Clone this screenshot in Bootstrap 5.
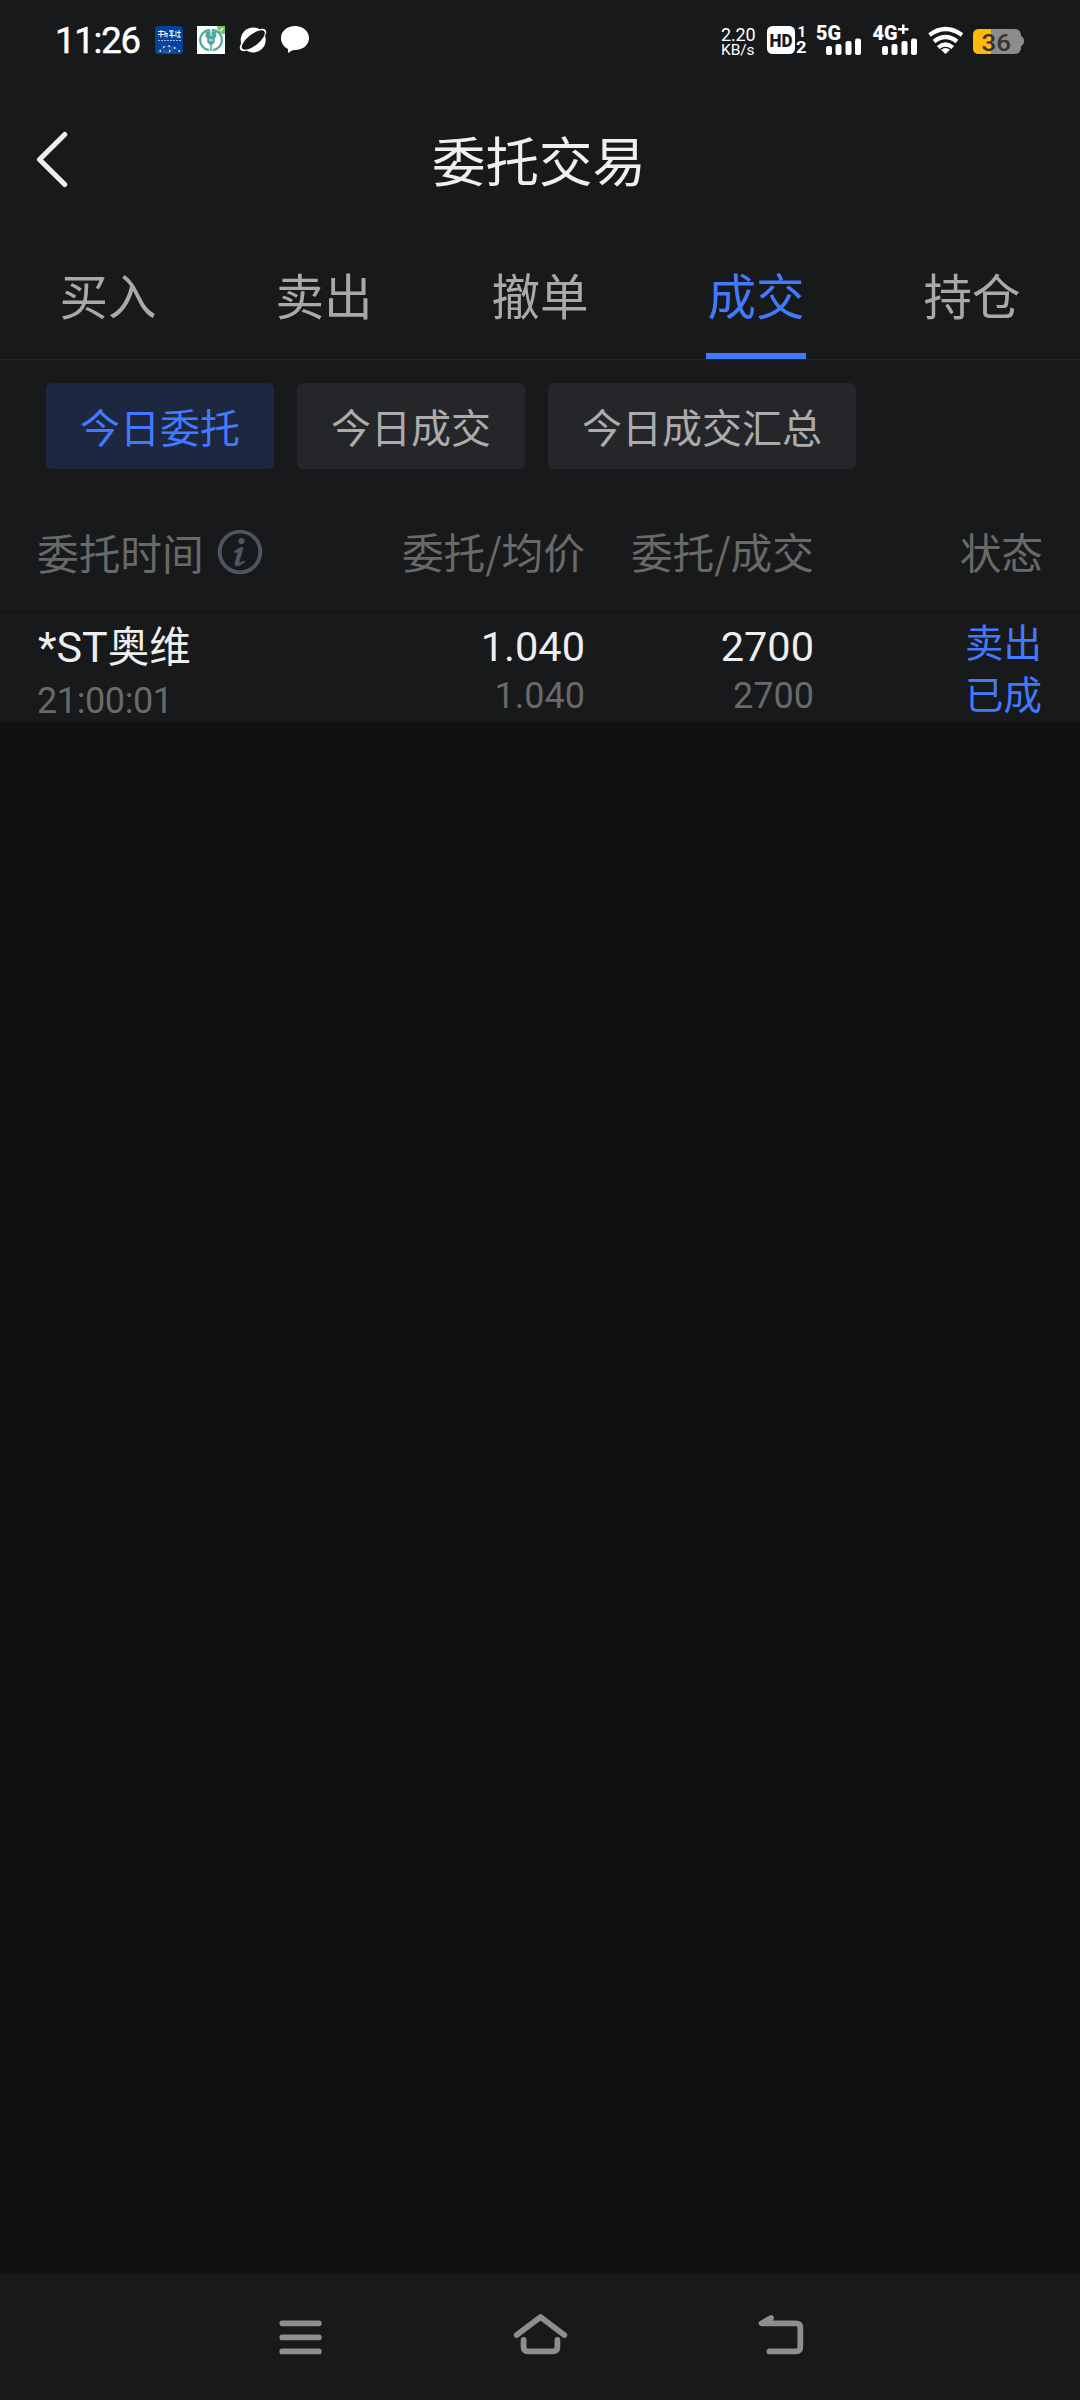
<!DOCTYPE html>
<html lang="zh-CN">
<head>
<meta charset="utf-8">
<meta name="viewport" content="width=device-width, initial-scale=1">
<title>委托交易</title>
<link rel="stylesheet" href="https://cdn.jsdelivr.net/npm/bootstrap@5.3.0/dist/css/bootstrap.min.css">
<style>
  body { width: 1080px; height: 2400px; background: #101113; color: #eee; font-family: "Noto Sans CJK SC", sans-serif; overflow: hidden; }
  svg { display: block; flex: none; }
  svg text { font-family: Roboto, sans-serif; }
  .panel { background: #18191b; }
  .status-line { height: 80px; padding-left: 50px; }
  .title-line { height: 160px; padding-left: 33px; padding-right: 35px; }
  .title-line h1 { font-size: 53.5px; line-height: 80px; font-weight: 400; color: #efefef; padding-bottom: 3px; }
  .title-side { width: 40px; }
  .main-tabs { height: 120px; border-bottom: 1px solid #27282a; }
  .main-tabs .nav-item .nav-link { height: 119px; padding: 0; width: 100px; margin: 0 auto; font-size: 48.5px; line-height: 108px; color: #a9a9a9; text-align: center; border-bottom: 6px solid transparent; white-space: nowrap; }
  .main-tabs .nav-item .nav-link.active { color: #427aff; border-bottom-color: #427aff; }
  .chips { height: 133px; padding: 23px 46px 0; gap: 23px; border-bottom: 1px solid #1c1d1f; }
  .chips .btn { --bs-btn-padding-x: 34px; --bs-btn-padding-y: 0; --bs-btn-border-width: 0; --bs-btn-font-size: 40px; --bs-btn-border-radius: 6px; --bs-btn-color: #acacac; --bs-btn-bg: #25262a; height: 86px; line-height: 84px; white-space: nowrap; }
  .chips .btn.current { --bs-btn-color: #427aff; --bs-btn-bg: #1e2740; }
  .order-head { height: 120px; font-size: 41.7px; line-height: 116px; color: #696969; border-bottom: 1px solid #0f1011; }
  .order-head, .order-row { padding-left: 37px; padding-right: 37px; }
  .w-price { width: 229px; }
  .w-name { width: 319px; gap: 13px; }
  .order-head .w-name { line-height: 112px; padding-bottom: 2px; }
  .order-row { height: 109px; }
  .num { font-family: Roboto, sans-serif; font-size: 41.5px; line-height: 50px; padding-top: 9px; }
  .sub { font-family: Roboto, sans-serif; font-size: 36px; line-height: 48px; color: #696969; }
  .name { font-size: 41.5px; line-height: 56px; padding-top: 3px; padding-left: 1px; }
  .name span { font-family: Roboto, sans-serif; font-size: 43px; }
  .name + .sub { line-height: 53px; letter-spacing: -.4px; }
  .state { font-size: 38.5px; line-height: 52px; color: #427aff; padding-top: 1px; padding-right: 1px; }
  .sysnav { height: 126px; }
</style>
<script src="https://cdn.jsdelivr.net/npm/bootstrap@5.3.0/dist/js/bootstrap.bundle.min.js"></script>
</head>
<body class="d-flex flex-column">
<header class="panel">
  <div class="status-line d-flex">
    <svg width="100" height="80" viewBox="50 0 100 80"><text x="55" y="53" font-size="36.5" font-weight="400" fill="#fff" stroke="#fff" stroke-width=".5" textLength="86">11:26</text></svg>
    <svg width="42" height="80" viewBox="150 0 42 80">
      <rect x="155" y="26" width="28" height="28" rx="4" fill="#06439c"/>
      <g stroke="#fff" stroke-width="1" fill="none"><path d="M158 31.500h6M161 30v7.500M158 34.500h6M165 31v6M165 33.500h3M167 33.500v4M169 31h5M171 30v5M169 35.500h6M172 32v6M176 31v6M177 32.500h4M179 30v7.500M177 37h4"/></g>
      <path d="M158 40.500h23" stroke="#9db9e4" stroke-width="1.200" stroke-dasharray="2 1"/>
      <path d="M157 53q4-5 7-6t10 0q4 2 7 6M162 48l7 5 5-6M169 46v7l-8-2m14 2-5-7" stroke="#5079bd" stroke-width=".6" fill="none"/>
      <path d="M163 47h1.500m4-1h1.500m4 2h1.500m-16 3h1.500m8 0h1.500m8 0h1.500" stroke="#fff" stroke-width="1.400"/>
    </svg>
    <svg width="42" height="80" viewBox="192 0 42 80">
      <rect x="197" y="26" width="28" height="28" fill="#fff"/>
      <path d="M217 26h8v8h-3q-4-2-5-8z" fill="#73c45a"/><path d="M220 31l3-3" stroke="#fff" stroke-width="1.300"/>
      <path d="M209 29.800a10.300 10.300 0 0 0 0 20.400M213 29.800a10.300 10.300 0 0 1 0 20.400" fill="none" stroke="#4da99f" stroke-width="2.200"/>
      <path d="M206.500 31.500v5.500h9v-5.500M208 37v5l2 2h2l2-2v-5zM211 43v8M209.500 29v8M212.500 29v8" fill="#4da99f" stroke="#4da99f" stroke-width="1.600"/><path d="M211 28v8M209 40h4" stroke="#fff" stroke-width="1"/>
    </svg>
    <svg width="42" height="80" viewBox="234 0 42 80">
      <circle cx="253.200" cy="40" r="12.500" fill="#fff"/>
      <ellipse cx="253" cy="40" rx="16" ry="6.500" transform="rotate(-38 253 40)" fill="#fff"/>
      <ellipse cx="253.300" cy="40" rx="14" ry="5.600" transform="rotate(-38 253.300 40)" fill="#18191b"/>
    </svg>
    <svg width="42" height="80" viewBox="276 0 42 80"><path d="M295 26c8 0 14 5 14 12s-6 12-14 12q-2 0-3 .5l-4 2.500v-4c-4-2-7-6-7-11 0-7 6-12 14-12z" fill="#fff"/></svg>
    <svg class="ms-auto" width="370" height="80" viewBox="710 0 370 80">
      <g fill="#fff">
        <text x="721" y="40.500" font-size="18" textLength="34.500">2.20</text>
        <text x="721" y="54.500" font-size="15.500" textLength="33.500">KB/s</text>
        <rect x="767" y="26" width="28" height="28" rx="5.500"/>
        <text x="797.500" y="37" font-size="15" font-weight="700">1</text>
        <text x="796" y="53" font-size="16.500" font-weight="700" textLength="10.500" lengthAdjust="spacingAndGlyphs">2</text>
        <text x="816" y="40" font-size="20.500" font-weight="900" textLength="25" lengthAdjust="spacingAndGlyphs">5G</text>
        <text x="872.500" y="40" font-size="20.500" font-weight="900" textLength="25" lengthAdjust="spacingAndGlyphs">4G</text>
        <path d="M898 28h4v-3.500h2.500V28h4v2.500h-4V34H902v-3.500h-4z"/>
        <g id="bars"><rect x="826" y="46" width="6" height="9" rx="2"/><rect x="835.500" y="44" width="6" height="11" rx="2"/><rect x="845.500" y="41" width="6" height="14" rx="2"/><rect x="855" y="38.500" width="6" height="16.500" rx="2"/></g>
        <use href="#bars" x="56"/>
        <path d="M945.500 54l-4.500-4.300q4.500-3.400 9 0z"/>
      </g>
      <text x="769.500" y="47" font-size="19" font-weight="900" fill="#18191b" textLength="23" lengthAdjust="spacingAndGlyphs">HD</text>
      <g fill="none" stroke="#fff" stroke-width="4.200"><path d="M929.500 35q16-12 32.500 0M934 41.500q11.500-9 23 0M938.200 47.500q7.300-6 14.600 0"/></g>
      <path d="M1019 36h2q3 1 3 5t-3 5h-2z" fill="#8c8c8c"/>
      <rect x="973" y="29" width="48" height="25" rx="6" fill="#8c8c8c"/>
      <path d="M979 29h12v25h-12q-6 0-6-6V35q0-6 6-6z" fill="#fdb90c"/>
      <text x="981.500" y="50.500" font-size="24" font-weight="500" fill="#333" textLength="29.500" lengthAdjust="spacingAndGlyphs">36</text>
    </svg>
  </div>
  <div class="title-line d-flex align-items-center justify-content-between">
    <svg class="title-side" width="40" height="60" viewBox="34 130 40 60"><path d="M65.800 134.500L40.500 159.500 65.800 184.500" fill="none" stroke="#efefef" stroke-width="5.200" stroke-linecap="round" stroke-linejoin="round"/></svg>
    <h1 class="m-0">委托交易</h1>
    <span class="title-side"></span>
  </div>
</header>
<nav class="panel main-tabs nav nav-justified">
  <div class="nav-item"><a class="nav-link">买入</a></div>
  <div class="nav-item"><a class="nav-link">卖出</a></div>
  <div class="nav-item"><a class="nav-link">撤单</a></div>
  <div class="nav-item"><a class="nav-link active">成交</a></div>
  <div class="nav-item"><a class="nav-link">持仓</a></div>
</nav>
<div class="panel chips d-flex">
  <button class="btn current">今日委托</button>
  <button class="btn">今日成交</button>
  <button class="btn">今日成交汇总</button>
</div>
<main class="flex-grow-1">
  <div class="panel order-head d-flex text-end">
    <div class="w-name d-flex align-items-center">委托时间
      <svg width="46" height="46" viewBox="0 0 46 46"><circle cx="23" cy="23" r="20.300" fill="none" stroke="#505564" stroke-width="3.800"/><circle cx="24.500" cy="12" r="3.100" fill="#505564"/><path d="M17 22.500q4-3.500 8-4.500l1 .5q-1 6-4 14 0 1.500 1 1.200 2-.5 4.500-2l.5 1q-4 4-8 4.300-2.500 0-2-3 1.500-5 3-11-1.500.2-3 .8z" fill="#505564" stroke="#505564" stroke-width=".6"/></svg>
    </div>
    <div class="w-price">委托/均价</div>
    <div class="w-price">委托/成交</div>
    <div class="w-price">状态</div>
  </div>
  <div class="panel order-row d-flex text-end">
    <div class="w-name text-start"><div class="name"><span>*ST</span>奥维</div><div class="sub">21:00:01</div></div>
    <div class="w-price"><div class="num">1.040</div><div class="sub">1.040</div></div>
    <div class="w-price"><div class="num">2700</div><div class="sub">2700</div></div>
    <div class="w-price state"><div>卖出</div><div>已成</div></div>
  </div>
</main>
<footer class="panel sysnav d-flex justify-content-center">
  <svg width="1080" height="126" viewBox="0 2274 1080 126" fill="none" stroke="#8e8e90" stroke-width="5.800" stroke-linecap="round" stroke-linejoin="round">
    <path d="M282.300 2323.300h36.500M282.300 2337.400h36.500M282.300 2351.400h36.500"/>
    <path d="M516.700 2335L540.500 2317 564.300 2335M523.600 2340v7q0 4.400 4.400 4.400h25q4.400 0 4.400-4.400v-7"/>
    <path d="M771 2318L761.500 2323.400H796q4.300 0 4.300 4.300V2347q0 4.400-4.300 4.400H769.500"/>
  </svg>
</footer>
</body>
</html>
